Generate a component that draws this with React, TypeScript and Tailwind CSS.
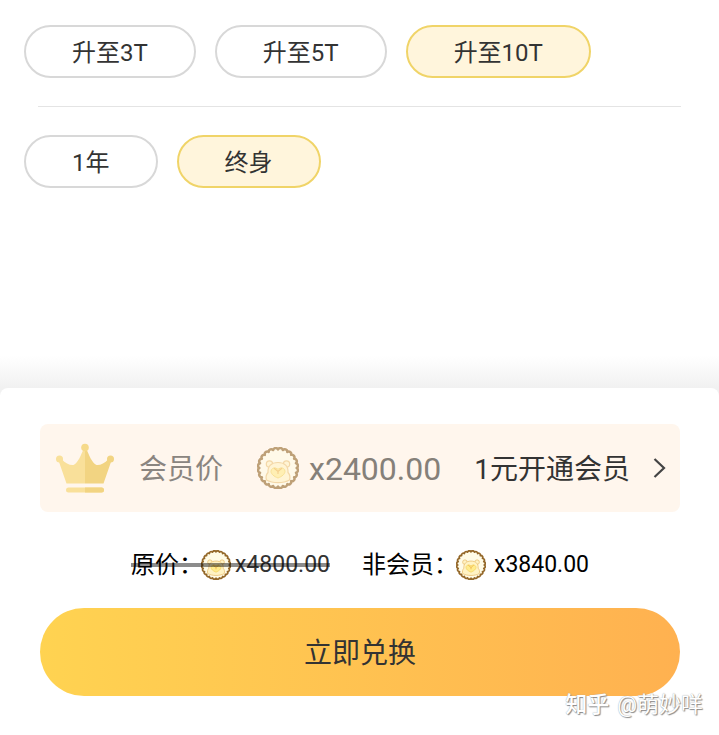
import { useState } from "react"

const sizes = ["升至3T", "升至5T", "升至10T"]
const terms = ["1年", "终身"]

// Scalloped rim of the coin, 24 bumps around a 42x42 box
const bumps = 24
const rim =
  Array.from({ length: bumps + 1 }, (_, i) => {
    const angle = (i / bumps) * Math.PI * 2
    const x = (21 + Math.cos(angle) * 18.6).toFixed(2)
    const y = (21 + Math.sin(angle) * 18.6).toFixed(2)
    return i === 0 ? `M${x} ${y}` : `A2.6 2.6 0 0 1 ${x} ${y}`
  }).join("") + "Z"

function Coin({ className }: { className: string }) {
  return (
    <svg viewBox="0 0 42 42" className={className} aria-hidden="true">
      <path
        d={rim}
        fill="#fffbe6"
        stroke="#94682a"
        strokeWidth="2.5"
        strokeLinejoin="round"
      />
      <g fill="#fff3c4" stroke="#ecc47a" strokeWidth="1.2">
        <circle cx="12.5" cy="17" r="3.2" />
        <circle cx="29.5" cy="17" r="3.2" />
        <path d="M9.500 33c-1-3-.2-5.500 1.500-7.500C10.500 19 14.500 15.500 21 15.500S31.500 19 31 25.500c1.700 2 2.500 4.500 1.500 7.500-6 3.500-17 3.500-23 0z" />
      </g>
      <path
        d="M21 31c-4-1.500-7-4-7-6.700 0-2.500 2.500-3.800 4.500-3.300l2.500 1.200 2.500-1.200c2-.5 4.500.8 4.500 3.300 0 2.700-3 5.200-7 6.700z"
        fill="#ffec8e"
        stroke="#f5d45c"
        strokeWidth="1"
      />
      <path
        d="M17.500 21.500L21 24.500l3.500-3M21 24.500v2"
        fill="none"
        stroke="#f0b84e"
        strokeWidth="1.2"
        strokeLinecap="round"
      />
    </svg>
  )
}

function Crown() {
  return (
    <svg viewBox="0 0 60 52" className="h-[52px] w-[60px]" aria-hidden="true">
      <g fill="#f9e09a">
        <circle cx="4.5" cy="17" r="3.5" />
        <path d="M3.500 18.500l3-1.500c4 4.500 8.500 6.500 12 6C23 21 26 13 29 6h1v35.500H11.500z" />
        <rect x="11" y="45.500" width="38" height="5" rx="2.500" />
      </g>
      <g fill="#f2d482">
        <path d="M30 6h1c3 7 6 15 10.500 17 3.500.5 8-1.500 12-6l3 1.500L48.500 41.500H30z" />
        <path d="M30 45.500h16.500a2.500 2.500 0 0 1 0 5H30z" />
        <circle cx="55.500" cy="17" r="3.500" />
      </g>
      <circle cx="30" cy="5.500" r="3.800" fill="#f6da8a" />
    </svg>
  )
}

type OptionsProps = {
  name: string
  options: string[]
  value: string
  onChange: (value: string) => void
}

function Options({ name, options, value, onChange }: OptionsProps) {
  return (
    <div role="group" aria-label={name} className="flex flex-wrap gap-[19px]">
      {options.map((option) => (
        <button
          key={option}
          type="button"
          aria-pressed={option === value}
          onClick={() => onChange(option)}
          className={
            option === value
              ? "h-[53px] rounded-full border-2 border-[#f0d468] bg-[#fff5dc] px-[46px] pt-0.5 text-2xl"
              : "h-[53px] rounded-full border-2 border-[#d8d8d8] bg-white px-[46px] pt-0.5 text-2xl"
          }
        >
          {option}
        </button>
      ))}
    </div>
  )
}

export default function App() {
  const [size, setSize] = useState("升至10T")
  const [term, setTerm] = useState("终身")

  return (
    <div className="relative flex min-h-screen flex-col bg-white font-[Roboto,'Noto_Sans_CJK_SC',sans-serif] text-[#333]">
      {/* Upgrade options */}
      <main className="px-6 pt-[25px]">
        <Options name="容量" options={sizes} value={size} onChange={setSize} />
        <hr className="mx-[14px] my-7 border-[#e4e4e4]" />
        <Options name="时长" options={terms} value={term} onChange={setTerm} />
      </main>

      <div className="mt-auto h-8 bg-linear-to-b from-white to-[#f1f1f1]" />

      {/* Payment sheet */}
      <div className="bg-[#f1f1f1]">
        <section className="rounded-t-lg bg-white pt-9 pr-[39px] pb-[39px] pl-10">
          <div className="flex h-22 items-center rounded-lg bg-[#fff6ed] pr-2.5 pl-[15px] text-[28px]">
            <Crown />
            <span className="ml-6 pt-1 text-[#8a8580]">会员价</span>
            <Coin className="ml-[34px] size-[42px] opacity-60" />
            <span className="ml-2.5 pt-0.5 text-[32px] text-[#858079]">
              x2400.00
            </span>
            <a href="#join" className="ml-auto flex items-center gap-5">
              <span className="pt-1">1元开通会员</span>
              <svg
                viewBox="0 0 20 24"
                className="h-6 w-5"
                fill="none"
                stroke="#444"
                strokeWidth="2.2"
                aria-hidden="true"
              >
                <path d="M4.500 3l9.500 9-9.500 9" />
              </svg>
            </a>
          </div>

          <div className="flex h-24 items-center justify-center gap-8 pt-2.5 text-2xl text-black">
            <del className="relative flex items-center no-underline">
              原价：
              <Coin className="-ml-0.5 mr-1 size-[30px]" />
              <span className="text-[23px] text-[#333]">x4800.00</span>
              <span className="absolute inset-x-0 top-1/2 h-1 -translate-y-1/2 bg-black/45" />
            </del>
            <span className="flex items-center">
              非会员：
              <Coin className="-ml-0.5 mr-2 size-[30px]" />
              <span className="text-[23px]">x3840.00</span>
            </span>
          </div>

          <button
            type="button"
            className="h-22 w-full rounded-full bg-linear-to-r from-[#ffd351] to-[#ffb150] pt-1 text-[28px]"
          >
            立即兑换
          </button>
        </section>
      </div>

      <p className="absolute right-4 bottom-3.5 flex items-center gap-2 text-[22px] text-white [text-shadow:1px_1px_1px_#888,0_0_1px_#999]">
        <span className="font-medium">知乎</span>
        <span>@萌妙咩</span>
      </p>
    </div>
  )
}
